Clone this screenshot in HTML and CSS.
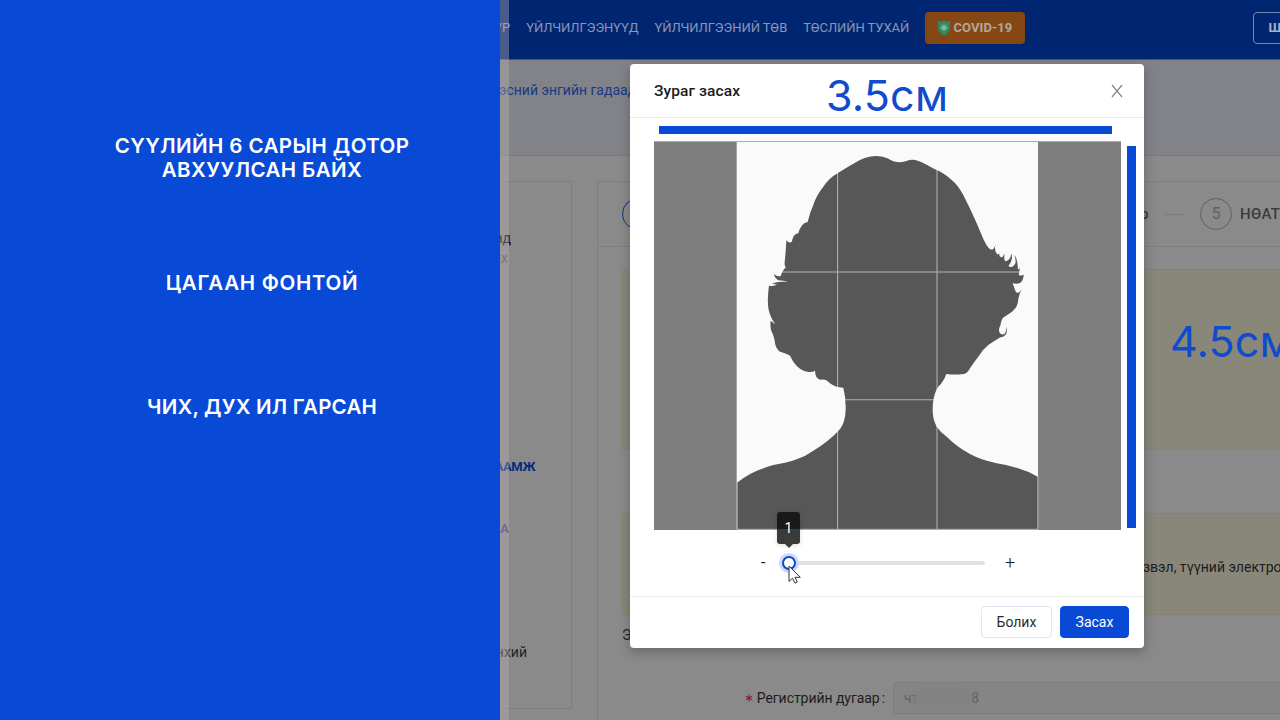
FILE: index.html
```html
<!DOCTYPE html>
<html lang="mn">
<head>
<meta charset="utf-8">
<title>Зураг засах</title>
<link rel="stylesheet" href="styles.css">
</head>
<body>
<div class="page">
  <header class="topbar">
    <nav class="nav">
      <span class="n1">УР</span><span class="n2">ҮЙЛЧИЛГЭЭНҮҮД</span><span class="n3">ҮЙЛЧИЛГЭЭНИЙ ТӨВ</span><span class="n4">ТӨСЛИЙН ТУХАЙ</span>
    </nav>
    <span class="covid">
      <svg width="14" height="16" viewBox="0 0 14 16"><path d="M1 1.5Q4 1.5 7 .5Q10 1.5 13 1.5V8Q13 13 7 15.5Q1 13 1 8Z" fill="#2c8a60"/><circle cx="7" cy="7.5" r="2.6" fill="#8fae9e"/><path d="M7 3.5V11.5M3 7.5H11M4.2 4.7L9.8 10.3M9.8 4.7L4.2 10.3" stroke="#8fae9e" stroke-width=".8"/></svg>
      <b>COVID-19</b>
    </span>
    <span class="login">Ш</span>
  </header>
  <div class="banner"><span>эсний энгийн гадаад</span></div>
  <main class="content">
    <aside class="side">
      <p class="s1">ад</p><p class="s2">ах</p><p class="s3">ЛААМЖ</p><p class="s4">АА</p><p class="s5">өнхий</p>
    </aside>
    <section class="card">
      <div class="steps"><span class="circle active"></span><span class="step-label prev">р</span><span class="rule"></span><span class="circle">5</span><span class="step-label">НӨАТ</span></div>
      <div class="alert a1"></div>
      <div class="alert a2"><span>звэл, түүний электро</span></div>
      <p class="lead">Э</p>
      <div class="field"><label><i><svg width="8" height="8" viewBox="0 0 8 8"><path d="M4 .5V7.5M1 2.2L7 5.8M7 2.2L1 5.8" stroke="#8d1a30" stroke-width="1.1"/></svg></i>Регистрийн дугаар<em>:</em></label><div class="input"><span>чт</span><span class="smudge"></span><span>8</span></div></div>
    </section>
  </main>
</div>

<section class="notes">
  <p class="m1">СҮҮЛИЙН 6 САРЫН ДОТОР</p>
  <p class="m2">АВХУУЛСАН БАЙХ</p>
  <p class="m3">ЦАГААН ФОНТОЙ</p>
  <p class="m4">ЧИХ, ДУХ ИЛ ГАРСАН</p>
</section>
<div class="strip"></div>

<div class="modal">
  <div class="modal-head"><span>Зураг засах</span>
    <svg width="12" height="14" viewBox="0 0 12 14"><path d="M1 1L11 13M11 1L1 13" stroke="#858585" stroke-width="1.2"/></svg>
  </div>
  <div class="modal-body">
    <svg class="crop" width="467" height="389" viewBox="654 141 467 389">
      <rect x="654" y="141" width="467" height="389" fill="#7f7f7f"/>
      <rect x="736.7" y="141" width="301.3" height="388.5" fill="#fafafa"/>
      <path fill="#575757" d="M737.3 529V482.5C748 474 760 469 773.3 465Q787 463 796.7 459.3Q806 456 813.3 450.7Q828 442 838.3 431C844 425 845.7 417 845.7 407Q845.7 397 843.3 387.7Q835 387.5 830 383.3L826 380Q823 379 820 379.7Q815 378 815 370.5Q813 372.5 809 372Q800 371.5 793.3 361.7L790 355.7Q787 353.5 780 351.7Q775 348 774.6 340Q773 334 771 330Q770 325 770.7 320.8L775.3 324.2Q770 317 768.5 309Q767 300 769 285.5Q771 287 777 284.7L772 283.4Q777 281.9 788 281.6Q783 280.8 778.3 280.3Q774.5 278 774 274Q777 277 780.8 276Q782 272 783.5 270L785.7 267.3Q784.2 266 784.7 262Q785.8 251 786.4 240.3Q789.5 244 792 241.5Q793 235 796.5 233.8L798.3 233.3Q801 223 807.7 222Q810 212 813.3 205Q816 196 823.3 186.7Q829 178 838.3 172.7Q849 166 860 160Q868 156 876.7 156Q883 156 888 158.5Q893 162 900 162.3C905 162 908 159.7 912.7 159.7C920 160 928 166 936.7 170Q944 173 951.7 180Q958 185 963.3 195Q970 208 976.7 223.3C981 233 985 245 990 249.2Q992 250 993.3 249Q995 247 995.8 243.3Q993.5 251 997.5 254.4L999.5 253.5Q998.5 258 1002.5 257L1004.7 253.5Q1003.3 261 1006 261.3Q1010.5 260 1011.3 253.5Q1013.5 260 1008.3 266Q1012.5 269 1015.5 263Q1016 259 1014.3 255Q1017.5 258 1018 269.8L1019.9 268L1018.8 274.9Q1022 276.3 1023.7 274.5Q1023.5 280 1020.5 282.7Q1017 284.5 1012.7 283.3L1015 290Q1016 293 1017.5 293Q1020.5 292 1021.7 289.5Q1019 294 1018.3 299Q1018.3 308 1009.5 313.5L1002.7 318Q1001 321 1000.5 325Q997.5 331 1000.5 333.7Q1005.5 337 1006.9 326.7Q1008 337 1000 337.5Q994 341 988.3 345Q982 350 978.3 356.7Q974 362 970 368.3Q967 374.5 961.5 374.3Q955 375 946.3 374Q945 379 940.5 384.5C936 388 932.6 398 932.7 410Q932.5 419 936.7 426.7Q941 433 946.7 436.7Q957 447 970 454Q981 460 996.7 463.3Q1021 467 1037.7 476.7V529Z"/>
      <path d="M837.6 142V529M937 142V529M737 272H1038M737 399.7H1038" stroke="#fafafa" stroke-opacity=".55" stroke-width="1.1" fill="none"/>
      <path d="M737 482V529.3H1038V476M654 141.5H1121" stroke="#a8a8a8" fill="none"/>
    </svg>
    <div class="slider"><span class="minus">-</span><span class="track"><span class="knob"></span></span><span class="plus">+</span></div>
  </div>
  <div class="modal-foot"><span class="btn">Болих</span><span class="btn primary">Засах</span></div>
</div>

<div class="bar-h"></div>
<div class="bar-v"></div>
<div class="size w">3.5см</div>
<div class="size h">4.5см</div>
<div class="tip">1</div>
<svg class="cursor" width="14" height="20" viewBox="0 0 14 20"><path d="M1 1V16.5L4.5 13.2L7 18.2L9.3 17L7 12.3H12.3Z" fill="#fff" stroke="#333" stroke-width="1"/></svg>
</body>
</html>
```

FILE: styles.css
```css
* { box-sizing: border-box; }
body { margin: 0; width: 1280px; height: 720px; overflow: hidden; position: relative; background: #8a8a8a; font: 14px/20px Roboto, sans-serif; color: #1d1d1d; }
p { margin: 0; }
.page { width: 1280px; height: 720px; overflow: hidden; }
.topbar { height: 60px; background: #002672; border-bottom: 1px solid #425681; display: flex; align-items: center; padding: 0 0 4px 494px; color: #8b97b3; white-space: nowrap; }
.nav { display: flex; gap: 16px; width: 430.5px; flex: none; font-size: 13px; letter-spacing: -.06px; }
.covid { width: 100px; flex: none; height: 32px; border-radius: 4px; background: #854713; color: #b2a79d; display: flex; align-items: center; gap: 3px; padding-left: 12px; font-size: 13px; letter-spacing: .1px; }
.login { margin-left: 228px; width: 80px; flex: none; height: 32px; border: 1px solid #7589b4; border-radius: 4px; padding: 5px 15px; font-size: 13px; font-weight: 700; color: #aab2c5; }
.banner { height: 96px; background: #818388; border-bottom: 1px solid #777b89; padding: 20px 0 0 499px; color: #173a83; white-space: nowrap; letter-spacing: -.02px; }
.content { display: flex; gap: 25px; padding-top: 25px; }
.side { width: 572px; flex: none; height: 528px; border: 1px solid #7d7d88; text-align: right; display: flex; flex-direction: column; color: #222; }
.s1 { margin-top: 46px; padding-right: 60px; color: #080808; }
.s2 { padding-right: 63px; color: #4e4e4e; }
.s3 { margin-top: 189px; padding-right: 36px; font-weight: 700; color: #062b7c; font-size: 13px; letter-spacing: -.4px; }
.s4 { margin-top: 42px; padding-right: 62px; font-size: 13px; color: #42427c; font-weight: 700; }
.s5 { margin-top: 103px; padding-right: 44px; }
.card { width: 720px; height: 600px; flex: none; border: 1px solid #7d7d88; }
.steps { height: 65px; border-bottom: 1px solid #7d7e85; display: flex; align-items: center; padding-left: 24px; font-size: 16px; color: #3c3c3c; }
.circle { width: 32px; height: 32px; border: 1px solid #626262; border-radius: 50%; display: flex; align-items: center; justify-content: center; color: #626262; }
.circle.active { border-color: #0a3488; }
.step-label { margin-left: 8px; font-weight: 500; font-size: 15px; letter-spacing: .3px; }
.step-label.prev { margin-left: 486px; width: 10px; font-weight: 500; }
.rule { width: 19px; height: 1px; background: #7a7a7a; margin: 0 16px 0 15px; }
.alert { margin-left: 24px; background: #88877a; border: 1px solid #89836a; border-radius: 4px; }
.a1 { margin-top: 22px; height: 181px; }
.a2 { margin-top: 63px; height: 102px; padding: 43px 0 0 520px; white-space: nowrap; }
.lead { margin: 10px 0 0 24px; }
.field { margin: 37px 0 0; display: flex; align-items: center; }
.field label { width: 295px; display: flex; justify-content: flex-end; align-items: center; padding-right: 8px; letter-spacing: -.05px; }
.field i { display: flex; margin-right: 4px; }
.field em { font-style: normal; margin-left: 2px; }
.input { width: 420px; height: 32px; border: 1px solid #7b7b83; background: #858585; border-radius: 4px; display: flex; align-items: center; padding-left: 10px; color: #616161; }
.smudge { width: 57px; height: 18px; background: #828282; filter: blur(3px); margin-left: -4px; }

.notes { position: absolute; left: 0; top: 0; width: 500px; height: 720px; background: #084ad6; color: #fff; font: 600 20.5px/24px Inter, sans-serif; letter-spacing: .42px; padding: 134px 0 0 24px; text-align: center; white-space: nowrap; }
.m3 { margin-top: 89px; letter-spacing: .7px; }
.m4 { margin-top: 100px; letter-spacing: .2px; }
.strip { position: absolute; left: 500px; top: 0; width: 9px; height: 720px; background: rgba(190,180,182,.38); }

.modal { position: absolute; left: 630px; top: 64px; width: 514px; height: 584px; background: #fff; border-radius: 4px; box-shadow: 0 4px 12px rgba(0,0,0,.25); display: flex; flex-direction: column; }
.modal-head { height: 54px; border-bottom: 1px solid #e9e9e9; display: flex; justify-content: space-between; align-items: center; padding: 0 21px 0 24px; font-size: 15.5px; font-weight: 500; letter-spacing: .1px; color: #1c1c1c; }
.modal-body { height: 478px; padding: 23px 0 0 24px; }
.crop { display: block; }
.slider { display: flex; align-items: center; height: 24px; margin-top: 21px; padding-left: 107px; font-size: 16px; }
.minus { width: 27px; }
.track { width: 197px; height: 4px; border-radius: 2px; background: #e1e1e1; position: relative; }
.plus { margin-left: 20px; font-size: 18px; font-weight: 300; }
.knob { position: absolute; left: -6px; top: -5px; width: 14px; height: 14px; border-radius: 50%; background: #fff; border: 2px solid #0b49c8; box-shadow: 0 0 0 3px #c9dafa; }
.modal-foot { height: 52px; border-top: 1px solid #ececec; display: flex; justify-content: flex-end; align-items: center; gap: 8px; padding: 0 15px 1px 0; }
.btn { width: 71px; height: 32px; border: 1px solid #e3e4f4; border-radius: 4px; display: flex; align-items: center; justify-content: center; color: #2d2d2d; }
.btn.primary { width: 69px; background: #084ad6; border-color: #084ad6; color: #fff; }

.bar-h { position: absolute; left: 659px; top: 126px; width: 453px; height: 8px; background: #084ad6; }
.bar-v { position: absolute; left: 1127px; top: 146px; width: 9px; height: 382px; background: #084ad6; }
.size { position: absolute; color: #104bce; font: 400 43px/50px Inter, sans-serif; letter-spacing: .2px; white-space: nowrap; }
.w { left: 826px; top: 70px; }
.h { left: 1170px; top: 316px; }
.tip { position: absolute; left: 777px; top: 512px; width: 23px; height: 32px; border-radius: 3px; background: linear-gradient(#191919 0 17px, #3b3b3b 17px); color: #fff; text-align: center; line-height: 32px; box-shadow: 0 1px 5px rgba(0,0,0,.15); }
.tip::after { content: ""; position: absolute; left: 8px; top: 32px; border: 4px solid transparent; border-top-color: #3b3b3b; border-bottom: 0; }
.cursor { position: absolute; left: 788px; top: 565px; }
```
